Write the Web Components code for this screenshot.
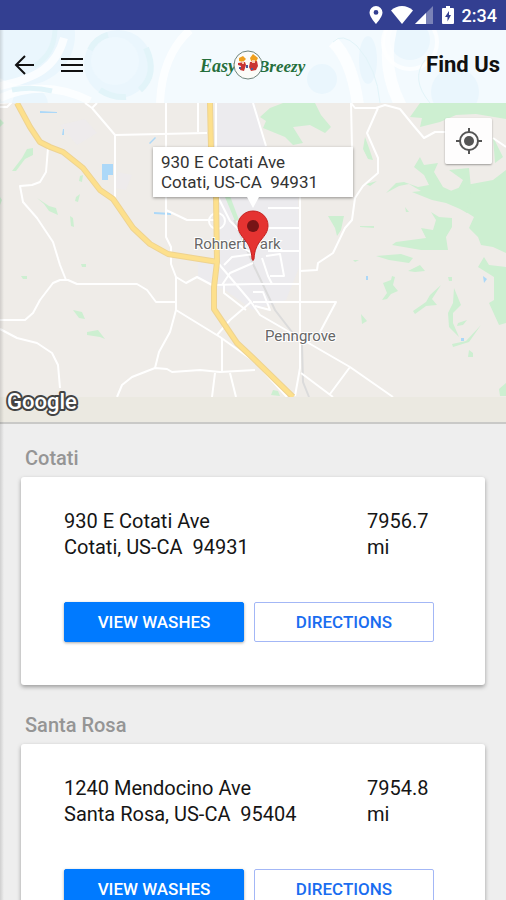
<!DOCTYPE html>
<html lang="en">
<head>
<meta charset="utf-8">
<meta name="viewport" content="width=device-width, initial-scale=1">
<title>Find Us</title>
<style>
  body {
    margin: 0;
    background: #eee;
    color: #151515;
    font-family: Roboto, "Liberation Sans", sans-serif;
  }
</style>
</head>
<body>
<wash-app>
  <status-bar slot="status" time="2:34"></status-bar>
  <app-header slot="header">Find Us</app-header>
  <store-map slot="map">930 E Cotati Ave
Cotati, US-CA  94931</store-map>
  <div id="locations"></div>
</wash-app>

<script>
const locations = [
  {
    city: "Cotati",
    address: "930 E Cotati Ave\nCotati, US-CA  94931",
    distance: "7956.7",
  },
  {
    city: "Santa Rosa",
    address: "1240 Mendocino Ave\nSanta Rosa, US-CA  95404",
    distance: "7954.8",
  },
];

class WashApp extends HTMLElement {
  constructor() {
    super();
    this.attachShadow({ mode: "open" });
    this.shadowRoot.innerHTML = `
      <style>
        :host {
          display: block;
          height: 100vh;
          overflow: hidden;
        }
        .page {
          position: relative;
        }
        /* shadow of the closed drawer */
        .page::before {
          content: "";
          position: absolute;
          z-index: 2;
          left: 0;
          top: 0;
          bottom: 0;
          width: 4px;
          background: linear-gradient(to right, rgba(0,0,0,0.13), rgba(0,0,0,0));
        }
        main {
          padding: 16px 21px;
        }
      </style>
      <slot name="status"></slot>
      <div class="page">
        <slot name="header"></slot>
        <slot name="map"></slot>
        <main><slot></slot></main>
      </div>
    `;
  }
}

class StatusBar extends HTMLElement {
  constructor() {
    super();
    this.attachShadow({ mode: "open" });
  }

  connectedCallback() {
    this.shadowRoot.innerHTML = `
      <style>
        :host {
          display: flex;
          align-items: center;
          justify-content: flex-end;
          height: 30px;
          padding: 0 9px;
          background: #333f91;
          color: #fff;
          font-size: 18px;
          font-weight: 500;
          line-height: 24px;
        }
        svg {
          display: block;
          fill: currentColor;
        }
        .signal {
          margin: 0 9px 0 2px;
        }
        time {
          margin: 2px 0 0 8px;
        }
        .pin {
          margin-right: 8px;
        }
      </style>
      <svg class="pin" width="14" height="20" viewBox="0 0 14 20"><path fill-rule="evenodd" d="M7 1a6.500 6.500 0 0 0-6.500 6.500C.5 12 7 19 7 19s6.500-7 6.500-11.500A6.500 6.500 0 0 0 7 1zm0 4a2.400 2.400 0 1 1 0 4.800A2.400 2.400 0 0 1 7 5z"/></svg>
      <svg width="22" height="18" viewBox="0 0 22 18"><path d="M11 18 0 4.500C3 1.500 7 0 11 0s8 1.500 11 4.500z"/></svg>
      <svg class="signal" width="18" height="18" viewBox="0 0 18 18"><path opacity=".35" d="M18 0v18H0z"/><path d="M11 7v11H0z"/></svg>
      <svg width="12" height="20" viewBox="0 0 12 20"><path fill-rule="evenodd" d="M4 1h4v2h3q1 0 1 1v14q0 1-1 1H1q-1 0-1-1V4q0-1 1-1h3zm3 5-4 6h2.500v4.500L9 10H7z"/></svg>
      <time>${this.getAttribute("time")}</time>
    `;
  }
}

class AppHeader extends HTMLElement {
  constructor() {
    super();
    this.attachShadow({ mode: "open" });
    this.shadowRoot.innerHTML = `
      <style>
        :host {
          display: grid;
          grid-template-columns: 1fr auto 1fr;
          align-items: center;
          height: 73px;
          padding-bottom: 4px;
          box-sizing: border-box;
          background: #f3fafe;
          position: relative;
          overflow: hidden;
        }
        .bubbles {
          position: absolute;
          inset: 0;
          width: 100%;
          height: 100%;
        }
        nav, .logo, h1 {
          position: relative;
        }
        nav {
          display: flex;
        }
        button {
          width: 48px;
          height: 48px;
          padding: 0;
          border: 0;
          background: none;
        }
        nav svg {
          display: block;
          margin: auto;
          fill: none;
          stroke: #111;
          stroke-width: 2;
        }
        .logo {
          display: block;
        }
        h1 {
          margin: 0;
          padding-right: 6px;
          text-align: right;
          font-size: 22px;
          line-height: 28px;
          font-weight: 700;
          color: #111;
        }
      </style>
      <svg class="bubbles" viewBox="0 0 506 73" preserveAspectRatio="xMidYMid slice" aria-hidden="true">
        <g fill="#eaf6fd">
          <circle cx="118" cy="34" r="34"/>
          <circle cx="25" cy="5" r="50"/>
          <circle cx="322" cy="49" r="15"/>
          <circle cx="410" cy="10" r="20"/>
          <ellipse cx="368" cy="30" rx="9" ry="24"/>
          <circle cx="455" cy="62" r="24"/>
          <circle cx="30" cy="75" r="18"/>
        </g>
        <g fill="none" stroke="#fff" stroke-opacity=".75">
          <path stroke-width="8" d="M64 8C56 38 36 48 0 56M0 68Q45 48 90 71M190 0Q162 25 160 73"/>
          <path stroke-width="12" d="M392-5Q380 38 402 78M333 12Q352 30 358 75"/>
          <circle cx="410" cy="12" r="27" stroke-width="4"/>
        </g>
        <g fill="none" stroke="#e2f4f9">
          <path stroke-width="6" d="M146 18Q158 44 140 60M100 60Q112 68 126 67M90 20Q96 8 108 5"/>
          <path stroke-width="5" d="M55 0Q54 25 34 36M12 60Q32 56 52 61"/>
          <path stroke-width="1" d="M333 12Q342 2 357 16Q377 38 380 73M425 30Q410 49 430 73"/>
        </g>
        <circle cx="115" cy="31" r="24" fill="#eef8fe"/>
      </svg>
      <nav>
        <button aria-label="Back"><svg width="24" height="24" viewBox="0 0 24 24"><path d="M22 12H4M13 3l-9 9 9 9"/></svg></button>
        <button aria-label="Menu"><svg width="24" height="24" viewBox="0 0 24 24"><path d="M1 6h22M1 12h22M1 18h22"/></svg></button>
      </nav>
      <svg class="logo" width="110" height="32" viewBox="0 0 110 32" role="img" aria-label="Easy Breezy">
        <g font-family="'Liberation Serif', serif" font-style="italic" font-weight="700" font-size="18" fill="#266f3c">
          <text x="2" y="23">Easy</text>
          <text x="60" y="23" font-size="17">Breezy</text>
        </g>
        <circle cx="50" cy="16" r="14" fill="#fcfcf8" stroke="#70857c" stroke-width="1"/>
        <path fill="#efa01e" d="M41 9l4-2 3 3-3 3-4-1zM52 9l3-4 5 4-2 4-5-1z"/>
        <path fill="#c93432" d="M40 14l7-1 1 3-2 6-4-1 1-4-3-1zM52 13l7-1 1 5-2 4-5 1-2-4z"/>
        <path fill="#f8c9ad" d="M44 12h2v3h-2zM54 11h3v3h-3z"/>
        <path fill="#465b9c" d="M41 18h2v2h-2zM48 16h2v3h-2zM53 19h2v2h-2z"/>
      </svg>
      <h1><slot></slot></h1>
    `;
  }
}

class StoreMap extends HTMLElement {
  constructor() {
    super();
    this.attachShadow({ mode: "open" });
    this.shadowRoot.innerHTML = `
      <style>
        :host {
          display: block;
          position: relative;
          height: 321px;
          overflow: hidden;
          background: #ebe9e1;
          border-bottom: 2px solid #c9c9c7;
          box-sizing: border-box;
        }
        .tiles {
          display: block;
          width: 100%;
          height: 319px;
        }
        .callout {
          position: absolute;
          left: 50%;
          top: 44px;
          transform: translateX(-50%);
          box-sizing: border-box;
          width: 200px;
          padding: 5px 8px;
          background: #fff;
          box-shadow: 0 1px 3px rgba(0,0,0,0.4);
          font-size: 17px;
          line-height: 20px;
          white-space: pre;
          color: #333;
        }
        .callout::after {
          content: "";
          position: absolute;
          left: 50%;
          top: 100%;
          margin-left: -6px;
          border: 6px solid transparent;
          border-top: 11px solid #fff;
          border-bottom: 0;
        }
        .pin {
          position: absolute;
          left: 50%;
          top: 107px;
          margin-left: -16px;
        }
        .locate {
          position: absolute;
          top: 15px;
          right: 14px;
          width: 47px;
          height: 46px;
          padding: 0;
          border: 0;
          border-radius: 2px;
          background: rgba(255,255,255,0.9);
          box-shadow: 0 1px 2px rgba(0,0,0,0.35);
        }
        .locate svg {
          display: block;
          margin: auto;
        }
      </style>
      <svg class="tiles" viewBox="0 103 506 319" preserveAspectRatio="xMidYMid slice" role="img" aria-label="Map of Rohnert Park and Penngrove">
        <path fill="#efece8" d="M-500 103h1500v294H-500z"/>
        <g fill="#ecebee">
          <path d="M217 103h38l11 42 32 52 2 68-14 35-33 10-28-20-27-12v-16l19-4z"/>
          <path d="M60 125l25-6 12 14-20 12zM118 172l14 3-6 15-12-2z" opacity=".6"/>
        </g>
        <g fill="#cdefd1">
          <path d="M260 117l10-9 13-5h32l6 12 10 12-6 6-15-8-17 2 10 16-10 2-8-8-22-9 3-7z"/>
          <path d="M410 117l10-14h86v16l-30-5-20 1-16 7-20 5 2-9zM493 137l10 20-8 6zM365 137l4 11 4 12-5-1-5-10z"/>
          <path d="M506 170l-13 10-27 5-13 5-7 3 10 12 10 7 8 5-5 11 9 9 3 8 12 2 13 6z"/>
          <path d="M386 193l10-10 8-1 14 5 11-2-5-10-10-8 6-10 4 8 14-2-4 9 9 15 13 6 7-13-14-10 20-2 2 20-4 25-7-4-14-6-14-3-20-8 9-1-12-7-10 2z"/>
          <path d="M431 212l8 5 13 1v9l-6 10 2 13h-27l-29-5 4-3 30-4-5-10 12 2 3-10zM376 256l25-2 12 4-4 5-20-3z"/>
          <path d="M484 257l5 8 17 2v56l-7 2-10-22 5-3v-23l-16-10z"/>
          <path d="M454 288l7 17-8 8v10l6 14-10-10-1-14 5-10zM481 325l-12 17-16 5-1-3 14-3zM458 323l9-3-4 5-6 1z"/>
          <path d="M328 216h16l-3 14-4 6-2-8zM360 226h14v2l-14-1zM408 271l12-6 5 6-10 1zM383 283l8-3 1-4 3 1-2 8 5 6-7 3-4 5-5 1 5-7zM413 311l13-9 4-7 11-10-9 14 5 6-11 1-11 8zM361 314l6 7-5 3zM499 389l7-6v13h-6zM448 277h4v4h-3zM469 350l4 3v4h-5zM353 260h6l-4 2zM405 207l4 5h-3zM366 184l11-3-7 5z"/>
          <path d="M12 171l10-13 5-9 6-1v7l-8 4-9 12zM37 198l12 8 7 2 2 7-9-4-5-7zM80 176l3-1-1 7-3-1zM76 197l4-3-2 8-3-1zM70 216l3 2 1 9-3-1zM73 310l9 2 3 7-6-1zM87 332l11-2 7 9-5-2-13-2zM225 197l5-1 9 24-4 1zM0 119l4 4-4 4zM0 197l2 3-2 5zM81 264h5v3h-4zM21 276h6v3h-4zM273 390l5 1 2 5-9-1z"/>
        </g>
        <g fill="#acd8f8">
          <path d="M102 164h11v11h-5v5h-6zM40 111l17 1v1H40zM154 212l17 1v2l-17-1zM63 129h1v6h-2zM149 143l6-6 1 1-6 6zM366 276h2v4h-2zM483 276l4 3-3 4zM461 338h3v3h-3z"/>
        </g>
        <path fill="none" stroke="#dbdbdb" stroke-width="2" d="M234 220L254 266 275 310 302 345 303 382 309 397"/>
        <g fill="none" stroke="#fff" stroke-width="2" stroke-linejoin="round">
          <path d="M85 103l7 5 23 27 92-2M97 103l-5 5M115 135v64M166 103v134l5 10v17l5 13v33l-6 22-11 20-4 16M198 103v29M0 103l12-1-5 5H0"/>
          <path d="M48 148l-2 24-6 10-8 3-12 1 3 16 14 16 16 24 7 23 6 15M0 320h25l8-7 7-13 13-17 7-3h8l9 4h60l10 6 9 12h20"/>
          <path d="M0 329l17 9 20 5 15 10 6 12 2 23M117 397l5-12 10-8 23-9 12 1 5 3 28-2 20 2 35-2M176 310l44 27 35 25 32 35M222 338v34M215 373l-3 24M230 373l6 24"/>
          <path d="M176 277l10 6 11-6 15 8 41-1M217 335l13-15 21-18M218 263l33 39 9 13 90 52 43 30M350 367l-20 27M301 373l32 24M166 210l21 10h27M222 285l8-12 23-10M224 285v8l22 17"/>
          <path d="M253 103l13 43M351 103l1 44M351 103l4 5h21l9-3 15 4 13 16 11 13 11-6h11M493 138l13 9M378 108l-11 25 11 25v15l-15 13-8 12-3 22-7 8-12 25-15 10-1 7-17 1"/>
          <path d="M300 197v171l-5 28M268 208h31M268 228h31M268 251h31M253 302h83l-16 30M218 197l12 24 22 22M230 240l20 12M224 265l8-8 22-3M253 284h46M262 258l6 18 4 8M266 256l14-2 4 22h-14M253 292h10l7 18-15-4M216 103v45"/>
          <circle cx="217" cy="221" r="8"/>
        </g>
        <g fill="none" stroke-linejoin="round">
          <path stroke="#eed391" stroke-width="6" d="M17 103l13 24 10 15 10 5 13 5 20 16 17 22 13 9 20 29 17 16 18 10 50 8M210 103l1 45 5 49 1 65-3 25v22l23 34 16 15 40 39"/>
          <path stroke="#fde08c" stroke-width="4" d="M17 103l13 24 10 15 10 5 13 5 20 16 17 22 13 9 20 29 17 16 18 10 50 8M210 103l1 45 5 49 1 65-3 25v22l23 34 16 15 40 39"/>
        </g>
        <path fill="#ebe9e1" d="M-500 397h1500v30H-500z"/>
        <g font-family="Roboto, sans-serif" font-size="15" fill="#666" stroke="#fff" stroke-width="2" paint-order="stroke">
          <text x="194" y="249">Rohnert Park</text>
          <text x="265" y="341">Penngrove</text>
        </g>
        <text x="7" y="409" font-family="Roboto, sans-serif" font-weight="500" font-size="22" fill="#fff" stroke="#444" stroke-width="4" stroke-linejoin="round" paint-order="stroke">Google</text>
      </svg>
      <svg class="pin" width="32" height="52" viewBox="0 0 32 52" aria-hidden="true">
        <path fill="#e53331" stroke="#c4211f" stroke-width="1" d="M16 1C7.500 1 1 7.500 1 15.500c0 6 3 9.500 7 14.500 4 5 6.500 10 7 19q1 3 2 0c.5-9 3-14 7-19 4-5 7-8.500 7-14.500C31 7.500 24.500 1 16 1z"/>
        <circle cx="16" cy="16" r="6" fill="#771416"/>
      </svg>
      <div class="callout"><slot></slot></div>
      <button class="locate" aria-label="My location">
        <svg width="28" height="28" viewBox="0 0 28 28" fill="none" stroke="#555" stroke-width="2">
          <circle cx="14" cy="14" r="9"/>
          <circle cx="14" cy="14" r="5" fill="#555" stroke="none"/>
          <path d="M14 1v5M14 22v5M1 14h5M22 14h5"/>
        </svg>
      </button>
    `;
  }
}

class LocationCard extends HTMLElement {
  constructor() {
    super();
    this.attachShadow({ mode: "open" });
  }

  connectedCallback() {
    const city = this.getAttribute("city");
    const distance = this.getAttribute("distance");

    this.shadowRoot.innerHTML = `
      <style>
        :host {
          display: block;
          margin-bottom: 22px;
        }
        h2 {
          margin: 0;
          padding: 5px 4px 6px;
          font-size: 20px;
          line-height: 26px;
          font-weight: 500;
          color: #959595;
        }
        .card {
          padding: 31px 51px 43px 43px;
          background: #fff;
          border-radius: 3px;
          box-shadow: 0 2px 4px rgba(0,0,0,0.35);
        }
        .info, .actions {
          display: grid;
        }
        .info {
          grid-template-columns: 1fr 67px;
          font-size: 20px;
          line-height: 26px;
        }
        p {
          margin: 0;
          white-space: pre-line;
        }
        .address {
          white-space: pre-wrap;
        }
        .actions {
          grid-template-columns: 1fr 1fr;
          gap: 10px;
          margin-top: 42px;
        }
        button {
          height: 40px;
          padding: 0;
          border: 1px solid #007aff;
          border-radius: 2px;
          background: #007aff;
          color: #fff;
          font: 500 17px/24px Roboto, "Liberation Sans", sans-serif;
          box-shadow: 0 1px 3px rgba(0,0,0,0.35);
        }
        .outline {
          border-color: #a3b7f6;
          background: #fff;
          color: #1a6df0;
          box-shadow: none;
        }
      </style>
      <h2>${city}</h2>
      <div class="card">
        <div class="info">
          <p class="address"><slot></slot></p>
          <p>${distance}\nmi</p>
        </div>
        <div class="actions">
          <button>VIEW WASHES</button>
          <button class="outline">DIRECTIONS</button>
        </div>
      </div>
    `;
  }
}

customElements.define("wash-app", WashApp);
customElements.define("status-bar", StatusBar);
customElements.define("app-header", AppHeader);
customElements.define("store-map", StoreMap);
customElements.define("location-card", LocationCard);

const container = document.getElementById("locations");

locations.forEach((location) => {
  const card = document.createElement("location-card");
  card.setAttribute("city", location.city);
  card.setAttribute("distance", location.distance);
  card.textContent = location.address;
  container.appendChild(card);
});
</script>
</body>
</html>
